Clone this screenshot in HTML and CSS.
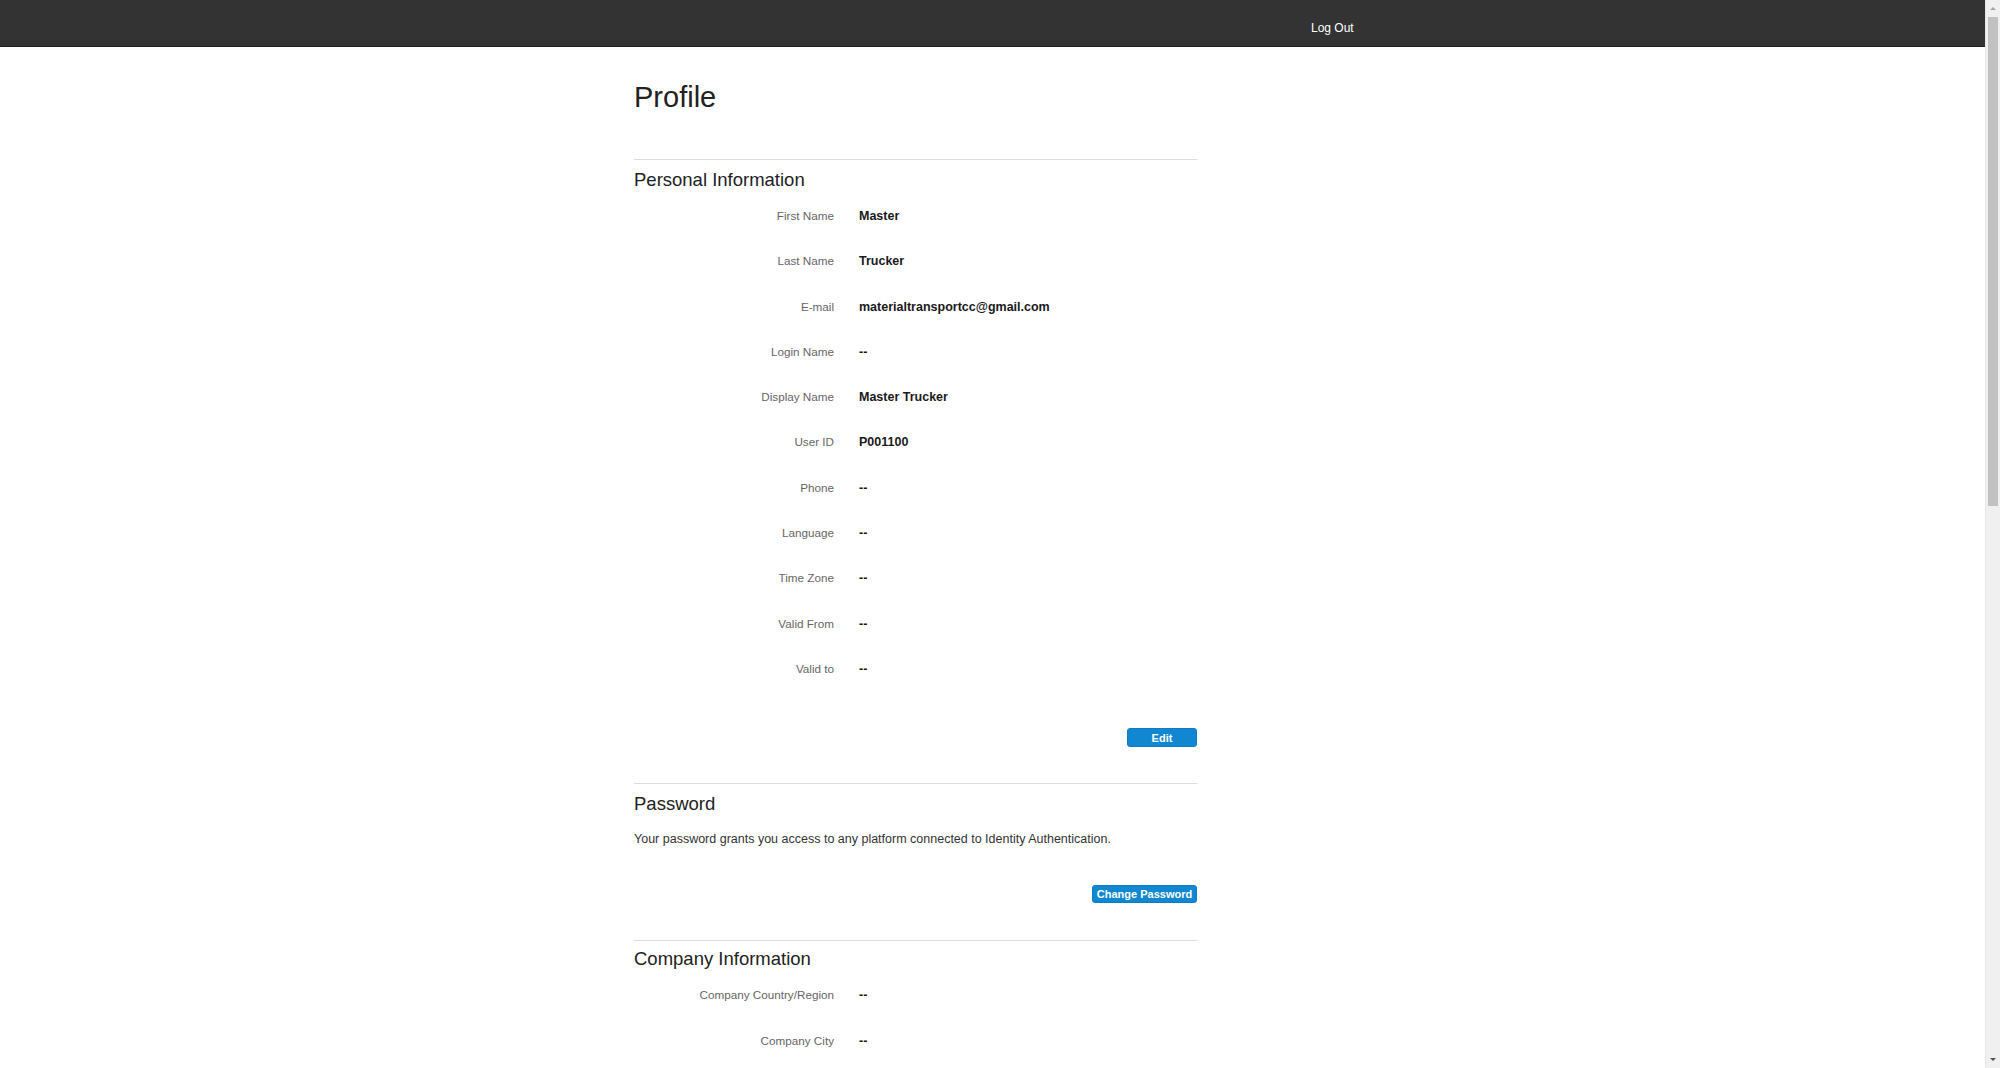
FILE: index.html
```html
<!DOCTYPE html>
<html lang="en">
<head>
<meta charset="utf-8">
<title>Profile</title>
<link rel="stylesheet" href="styles.css">
</head>
<body>
<div class="app">
  <div class="page">
    <header class="topbar">
      <a class="logout" href="#">Log Out</a>
    </header>
    <main class="content">
      <h1 class="title">Profile</h1>

      <section class="section">
        <h2 class="section-title">Personal Information</h2>
        <div class="fields">
          <div class="row"><span class="label">First Name</span><span class="value">Master</span></div>
          <div class="row"><span class="label">Last Name</span><span class="value">Trucker</span></div>
          <div class="row"><span class="label">E-mail</span><span class="value">materialtransportcc@gmail.com</span></div>
          <div class="row"><span class="label">Login Name</span><span class="value">--</span></div>
          <div class="row"><span class="label">Display Name</span><span class="value">Master Trucker</span></div>
          <div class="row"><span class="label">User ID</span><span class="value">P001100</span></div>
          <div class="row"><span class="label">Phone</span><span class="value">--</span></div>
          <div class="row"><span class="label">Language</span><span class="value">--</span></div>
          <div class="row"><span class="label">Time Zone</span><span class="value">--</span></div>
          <div class="row"><span class="label">Valid From</span><span class="value">--</span></div>
          <div class="row"><span class="label">Valid to</span><span class="value">--</span></div>
        </div>
        <div class="actions actions-edit"><button class="btn btn-edit">Edit</button></div>
      </section>

      <section class="section">
        <h2 class="section-title">Password</h2>
        <p class="note">Your password grants you access to any platform connected to Identity Authentication.</p>
        <div class="actions actions-pw"><button class="btn btn-pw">Change Password</button></div>
      </section>

      <section class="section section-company">
        <h2 class="section-title">Company Information</h2>
        <div class="fields">
          <div class="row"><span class="label">Company Country/Region</span><span class="value">--</span></div>
          <div class="row row-last"><span class="label">Company City</span><span class="value">--</span></div>
        </div>
      </section>
    </main>
  </div>
  <div class="scrollbar">
    <div class="sb-arrow sb-up"></div>
    <div class="sb-track"><div class="sb-thumb"></div></div>
    <div class="sb-arrow sb-down"></div>
  </div>
</div>
</body>
</html>
```

FILE: styles.css
```css
html, body {
  margin: 0;
  padding: 0;
  height: 1068px;
  overflow: hidden;
  background: #ffffff;
  font-family: "Liberation Sans", Arial, sans-serif;
  color: #222222;
}

.app {
  display: flex;
  height: 1068px;
}

.page {
  flex: 1;
  display: flex;
  flex-direction: column;
  overflow: hidden;
}

.topbar {
  height: 46px;
  background: #333333;
  border-bottom: 1px solid #1f1f1f;
  display: flex;
  align-items: center;
  flex-shrink: 0;
}

.logout {
  margin-left: 1311px;
  margin-top: 9px;
  color: #ffffff;
  font-size: 12px;
  text-decoration: none;
}

.content {
  margin-left: 634px;
  width: 563px;
  padding-top: 34px;
}

.title {
  margin: 0;
  font-size: 29px;
  font-weight: normal;
  line-height: 32px;
  color: #222222;
}

.section {
  border-top: 1px solid #dddddd;
  padding-top: 9px;
}

.section-company {
  padding-top: 7px;
}

.title + .section {
  margin-top: 46px;
}

.section-title {
  margin: 0;
  font-size: 18.5px;
  font-weight: normal;
  line-height: 22px;
  color: #222222;
}

.fields {
  margin-top: 2px;
  display: flex;
  flex-direction: column;
}

.row {
  display: flex;
  align-items: baseline;
  height: 45.3px;
  line-height: 45.3px;
}

.row-last {
  height: 30px;
}

.label {
  width: 200px;
  text-align: right;
  font-size: 11.7px;
  color: #666666;
  flex-shrink: 0;
}

.value {
  margin-left: 25px;
  font-size: 12.5px;
  font-weight: bold;
  color: #1a1a1a;
}

.actions {
  display: flex;
  justify-content: flex-end;
}

.actions-edit {
  margin-top: 37px;
  margin-bottom: 36px;
}

.actions-pw {
  margin-top: 38px;
  margin-bottom: 37px;
}

.btn {
  background: #1287d1;
  border: 1px solid #0f7cc2;
  border-radius: 3px;
  color: #ffffff;
  font-family: "Liberation Sans", Arial, sans-serif;
  font-weight: bold;
  font-size: 11px;
  padding: 0;
  cursor: pointer;
}

.btn-edit {
  width: 70px;
  height: 19px;
}

.btn-pw {
  width: 105px;
  height: 18px;
}

.note {
  margin: 16px 0 0 0;
  font-size: 12.5px;
  line-height: 16px;
  color: #333333;
}

.scrollbar {
  width: 14px;
  flex-shrink: 0;
  background: #f0f0f0;
  border-left: 1px solid #e6e6e6;
  display: flex;
  flex-direction: column;
}

.sb-arrow {
  height: 17px;
  display: flex;
  align-items: center;
  justify-content: center;
  flex-shrink: 0;
}

.sb-up::before {
  content: "";
  border-left: 3px solid transparent;
  border-right: 3px solid transparent;
  border-bottom: 3px solid #a3a3a3;
}

.sb-down::before {
  content: "";
  border-left: 3px solid transparent;
  border-right: 3px solid transparent;
  border-top: 3px solid #505050;
}

.sb-track {
  flex: 1;
  padding: 0 2px;
}

.sb-thumb {
  height: 489px;
  background: #c1c1c1;
}
```
